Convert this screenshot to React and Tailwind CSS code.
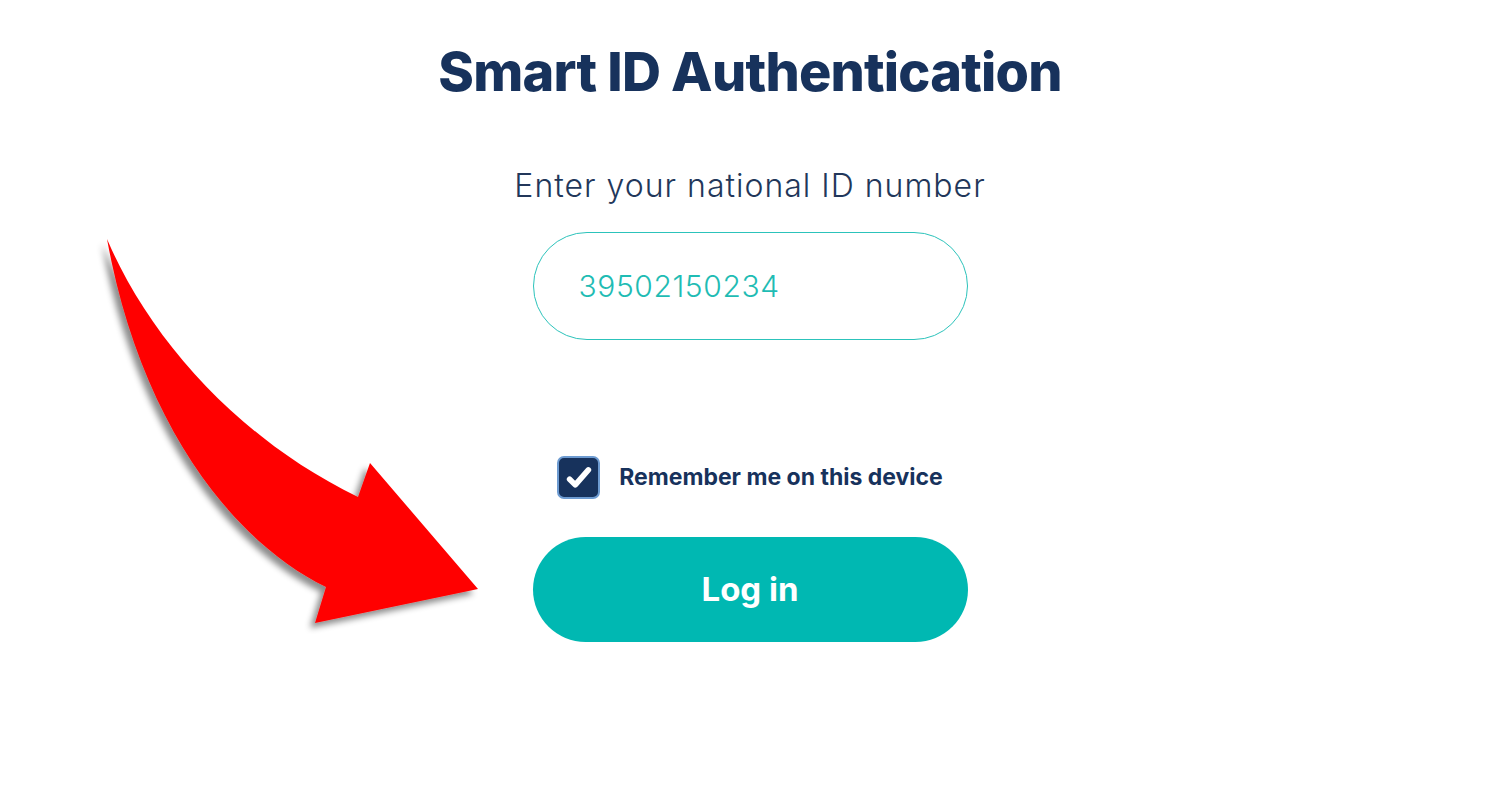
import React, { useState } from 'react';

const navy = '#17325c';

const Arrow = () => (
  <svg className="absolute left-0 top-0 pointer-events-none" width="520" height="660" viewBox="0 0 520 660">
    <defs>
      <filter id="shadow" x="-20%" y="-20%" width="140%" height="140%">
        <feDropShadow dx="-5" dy="5" stdDeviation="3" floodColor="#000" floodOpacity="0.45" />
      </filter>
    </defs>
    <path
      d="M107,239 C150,340 240,440 358,497 L370,463 L478,589 L315,623 L326,587 C230,540 140,420 107,239 Z"
      fill="#ff0000"
      filter="url(#shadow)"
    />
  </svg>
);

const App = () => {
  const [nationalId, setNationalId] = useState('39502150234');
  const [remember, setRemember] = useState(true);

  return (
    <div className="relative w-[1500px] h-[800px] bg-white overflow-hidden" style={{ fontFamily: 'Inter, "Noto Sans", sans-serif' }}>
      <div className="flex flex-col items-center pt-[40px]">
        <h1 className="text-[54px] leading-[64px] font-extrabold tracking-[-0.8px]" style={{ color: navy }}>
          Smart ID Authentication
        </h1>
        <p className="mt-[62px] text-[32px] leading-[40px] font-light tracking-[1px] text-[#22375a]">Enter your national ID number</p>
        <div className="mt-[26px] w-[435px] h-[108px] rounded-full border border-[#2cc3bb] flex items-center px-[45px]">
          <input
            value={nationalId}
            onChange={(e) => setNationalId(e.target.value)}
            className="w-full bg-transparent outline-none text-[30px] font-light tracking-[0.6px] text-[#1fbcb4]"
          />
        </div>
        <label className="mt-[116px] flex items-center gap-[19px] cursor-pointer">
          <span
            onClick={() => setRemember(!remember)}
            className="w-[43px] h-[43px] rounded-[7px] border-2 border-[#6d9bd1] bg-[#17325c] flex items-center justify-center"
          >
            {remember && (
              <svg width="30" height="30" viewBox="0 0 24 24" fill="none" stroke="#fff" strokeWidth="4.5" strokeLinecap="round" strokeLinejoin="round">
                <path d="M4.5 13l4.5 4.5L19.5 5.5" />
              </svg>
            )}
          </span>
          <span className="text-[23px] font-bold" style={{ color: navy }}>Remember me on this device</span>
        </label>
        <button className="mt-[38px] w-[435px] h-[105px] rounded-full bg-[#00b8b2] text-white text-[33px] font-bold">
          Log in
        </button>
      </div>
      <Arrow />
    </div>
  );
};

export default App;
